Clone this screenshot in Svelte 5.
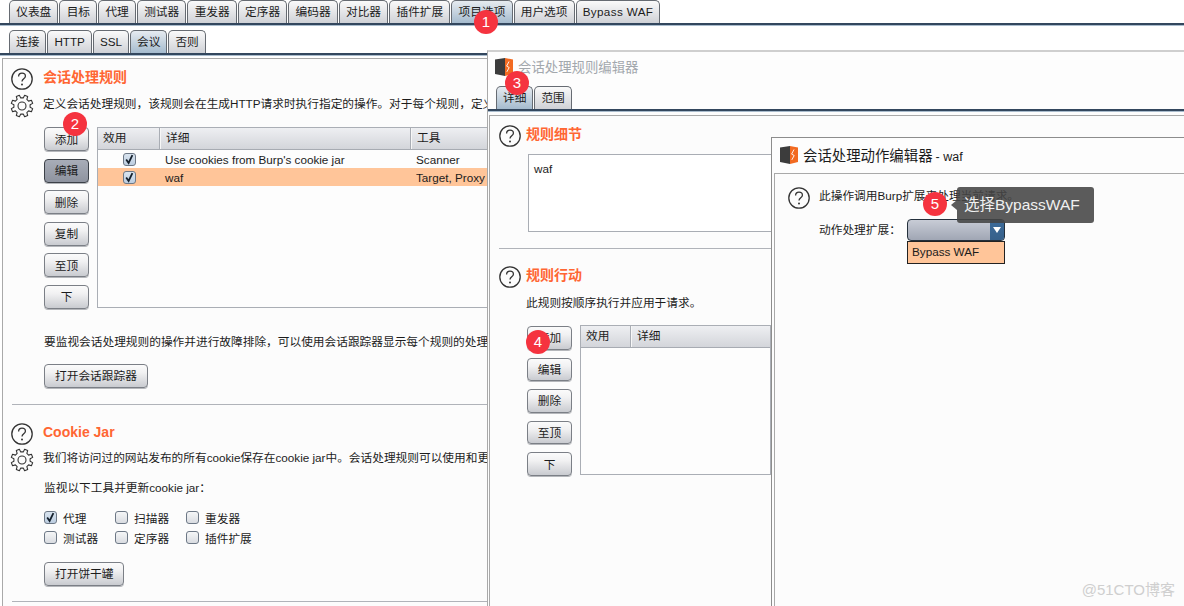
<script>
  let mainTabs = ['仪表盘', '目标', '代理', '测试器', '重发器', '定序器', '编码器', '对比器', '插件扩展', '项目选项', '用户选项', 'Bypass WAF'];
  let subTabs = ['连接', 'HTTP', 'SSL', '会议', '否则'];
  let ruleButtons = ['添加', '编辑', '删除', '复制', '至顶', '下'];
  let actionButtons = ['添加', '编辑', '删除', '至顶', '下'];
  let rules = [
    { detail: "Use cookies from Burp's cookie jar", tools: 'Scanner', selected: false },
    { detail: 'waf', tools: 'Target, Proxy', selected: true },
  ];
  let jarTools = [
    { name: '代理', on: true },
    { name: '扫描器', on: false },
    { name: '重发器', on: false },
    { name: '测试器', on: false },
    { name: '定序器', on: false },
    { name: '插件扩展', on: false },
  ];

  // 8 tooth cog outline, centred on 12,12
  function gearPoints() {
    let pts = [];
    for (let i = 0; i < 8; i++) {
      let a = (i * Math.PI) / 4 + Math.PI / 8;
      for (let [d, r] of [[-0.24, 8.2], [-0.15, 11], [0.15, 11], [0.24, 8.2]]) {
        pts.push((12 + r * Math.cos(a + d)).toFixed(2) + ',' + (12 + r * Math.sin(a + d)).toFixed(2));
      }
    }
    return pts.join(' ');
  }
  const gear = gearPoints();
</script>

{#snippet question()}
  <svg class="icon" width="22" height="22" viewBox="0 0 22 22">
    <circle cx="11" cy="11" r="10.2" fill="none" stroke="#333" stroke-width="1.3" />
    <path d="M7.6 8.4c0-2 1.5-3.2 3.4-3.2s3.4 1.2 3.4 3c0 2.6-3.4 2.6-3.4 5.4" fill="none" stroke="#333" stroke-width="1.3" />
    <circle cx="11" cy="16.4" r="1" fill="#333" />
  </svg>
{/snippet}

{#snippet cog()}
  <svg class="icon" width="24" height="24" viewBox="0 0 24 24">
    <polygon points={gear} fill="none" stroke="#333" stroke-width="1.1" stroke-linejoin="round" />
    <circle cx="12" cy="12" r="4" fill="none" stroke="#333" stroke-width="1.1" />
  </svg>
{/snippet}

{#snippet logo()}
  <svg class="icon" width="18" height="18" viewBox="0 0 18 18">
    <polygon points="0,1.5 10,0 10,18 0,16" fill="#3c3c3c" />
    <polygon points="10,0 18,1.5 18,16 10,18" fill="#f26a21" />
    <path d="M14 3.5l-2.4 4.6 2.6 1.4-2.4 4.4" fill="none" stroke="#fff" stroke-width="0.9" />
  </svg>
{/snippet}

{#snippet check(on)}
  <span class="check" class:on>
    {#if on}
      <svg width="13" height="13" viewBox="0 0 13 13">
        <path d="M3.2 6.6l2.4 3.4 3.8-7.8" fill="none" stroke="#14202c" stroke-width="1.8" />
      </svg>
    {/if}
  </span>
{/snippet}

<div class="page">
  <div class="tabs top">
    {#each mainTabs as t}
      <div class="tab" class:active={t === '项目选项'} class:latin={t === 'Bypass WAF'}>{t}</div>
    {/each}
  </div>
  <div class="rule"></div>
  <div class="tabs sub">
    {#each subTabs as t}
      <div class="tab" class:active={t === '会议'}>{t}</div>
    {/each}
  </div>
  <div class="rule"></div>

  <div class="panel">
    <div class="head">
      {@render question()}
      <h2>会话处理规则</h2>
    </div>
    <div class="desc">
      {@render cog()}
      <p>定义会话处理规则，该规则会在生成HTTP请求时执行指定的操作。对于每个规则，定义其范围和操作。</p>
    </div>

    <div class="editor">
      <div class="buttons">
        {#each ruleButtons as b}
          <button class:pressed={b === '编辑'}>{b}</button>
        {/each}
      </div>
      <div class="table rules">
        <div class="thead">
          <span>效用</span><span>详细</span><span>工具</span>
        </div>
        {#each rules as r}
          <div class="row" class:selected={r.selected}>
            <span class="mid">{@render check(true)}</span>
            <span>{r.detail}</span>
            <span>{r.tools}</span>
          </div>
        {/each}
      </div>
    </div>

    <p class="note">要监视会话处理规则的操作并进行故障排除，可以使用会话跟踪器显示每个规则的处理过程和结果。</p>
    <button class="open tracker">打开会话跟踪器</button>

    <hr class="first" />

    <div class="head">
      {@render question()}
      <h2>Cookie Jar</h2>
    </div>
    <div class="desc jar">
      {@render cog()}
      <p>我们将访问过的网站发布的所有cookie保存在cookie jar中。会话处理规则可以使用和更新这些cookie。</p>
    </div>
    <p class="monitor">监视以下工具并更新cookie jar：</p>
    <div class="tools">
      {#each jarTools as t}
        <label>{@render check(t.on)}{t.name}</label>
      {/each}
    </div>
    <button class="open jarbtn">打开饼干罐</button>
    <hr class="second" />
  </div>

  <section class="dialog rule-dialog">
    <div class="titlebar">
      {@render logo()}
      <span>会话处理规则编辑器</span>
    </div>
    <div class="tabs inner">
      <div class="tab active">详细</div>
      <div class="tab">范围</div>
    </div>
    <div class="rule"></div>
    <div class="panel inner-panel">
      <div class="head">
        {@render question()}
        <h2>规则细节</h2>
      </div>
      <div class="field">waf</div>
      <hr />
      <div class="head">
        {@render question()}
        <h2>规则行动</h2>
      </div>
      <p class="order">此规则按顺序执行并应用于请求。</p>
      <div class="editor actions">
        <div class="buttons">
          {#each actionButtons as b}
            <button>{b}</button>
          {/each}
        </div>
        <div class="table">
          <div class="thead two">
            <span>效用</span><span>详细</span>
          </div>
        </div>
      </div>
    </div>
  </section>

  <section class="dialog action-dialog">
    <div class="titlebar">
      {@render logo()}
      <span>会话处理动作编辑器<small>- waf</small></span>
    </div>
    <div class="panel action-panel">
      <div class="head">
        {@render question()}
        <p>此操作调用Burp扩展来处理当前请求。</p>
      </div>
      <div class="combo-row">
        <span>动作处理扩展：</span>
        <div class="combo-wrap">
          <div class="combo"><i><svg width="8" height="6" viewBox="0 0 8 6"><path d="M0 0h8L4 6z" fill="#fff" /></svg></i></div>
          <div class="option">Bypass WAF</div>
        </div>
      </div>
    </div>
  </section>

  <div class="tooltip">选择BypassWAF</div>

  <span class="badge b1">1</span>
  <span class="badge b2">2</span>
  <span class="badge b3">3</span>
  <span class="badge b4">4</span>
  <span class="badge b5">5</span>

  <div class="watermark">@51CTO博客</div>
</div>

<style>
  :global(body) {
    margin: 0;
    background: #fff;
  }

  .page {
    position: relative;
    width: 1184px;
    height: 606px;
    overflow: hidden;
    background: #fff;
    color: #1c1c1c;
    font: 11.7px "Liberation Sans", "Noto Sans CJK SC", sans-serif;
  }

  p, h2 {
    margin: 0;
    white-space: nowrap;
  }

  h2 {
    font-size: 14px;
    font-weight: bold;
    color: #ff6633;
    line-height: 16px;
    margin-bottom: 4px;
  }

  .head p, .desc p {
    line-height: 14px;
    margin-bottom: 4px;
  }

  .icon {
    flex: none;
    display: block;
  }

  /* tabs */
  .tabs {
    display: flex;
    gap: 1px;
    height: 23px;
    padding-left: 9px;
    align-items: flex-end;
  }

  .tabs.sub {
    margin-top: 4px;
  }

  .tab {
    box-sizing: border-box;
    height: 23px;
    padding: 0 6px;
    line-height: 22px;
    white-space: nowrap;
    text-align: center;
    border: 1px solid #666b72;
    border-bottom: none;
    border-radius: 5px 5px 0 0;
    background: linear-gradient(#fafafa, #cfd1d6);
  }

  .tabs.top .tab {
    padding: 0 6.2px;
  }

  .tabs.top .tab.latin {
    padding: 0 6px;
    letter-spacing: 0.35px;
  }

  .tab.active {
    background: linear-gradient(#e6ebf0, #a5bbce);
  }

  .rule {
    height: 3px;
    background: linear-gradient(#33475e 0 2px, #a9bccd 2px);
  }

  /* main panel */
  .panel {
    box-sizing: border-box;
    margin: 2px 0 0 2px;
    padding: 9px 0 0 8px;
    height: 548px;
    border-left: 1px solid #a9a9a9;
    border-top: 1px solid #a9a9a9;
    background: #fcfcfc;
    overflow: hidden;
  }

  .head {
    display: flex;
    align-items: center;
    gap: 10px;
    height: 22px;
  }

  .desc {
    display: flex;
    align-items: center;
    gap: 9px;
    margin: 4px 0 0 -1px;
    height: 24px;
  }

  .editor {
    display: flex;
    margin: 9px 0 0 33px;
    gap: 8px;
  }

  .buttons {
    display: flex;
    flex-direction: column;
    gap: 7.6px;
    width: 45px;
    flex: none;
  }

  button {
    box-sizing: border-box;
    height: 24px;
    padding: 0 0 2px;
    font: inherit;
    color: inherit;
    border: 1px solid #7b7f86;
    border-radius: 4px;
    background: linear-gradient(#fbfbfb, #f1f1f2 35%, #c9cbd0);
    box-shadow: 0 1px 0 #b5b7bb;
  }

  button.pressed {
    border-color: #3c4148;
    background: linear-gradient(#a8adb8, #8e939f);
  }

  .table {
    box-sizing: border-box;
    border: 1px solid #aaaeb5;
    background: #fdfdfd;
    flex: 1;
    overflow: hidden;
  }

  .rules {
    flex: none;
    width: 400px;
    height: 181px;
  }

  .thead, .row {
    display: grid;
    grid-template-columns: 62px 251px 1fr;
    align-items: center;
  }

  .thead {
    box-sizing: border-box;
    height: 22px;
    background: linear-gradient(#eeeff2, #d3d5da);
    border-bottom: 1px solid #a7abb2;
  }

  .thead.two {
    grid-template-columns: 50px 1fr;
  }

  .thead span {
    height: 100%;
    line-height: 20px;
    padding-left: 5px;
    border-left: 1px solid #f7f7f7;
    box-shadow: -1px 0 0 #a9adb4;
  }

  .thead span:first-child {
    border-left: none;
    box-shadow: none;
  }

  .row {
    height: 18px;
    line-height: 17px;
  }

  .row > span {
    padding-left: 5px;
    white-space: nowrap;
  }

  .row > .mid {
    display: flex;
    justify-content: center;
    padding: 0;
  }

  .row.selected {
    background: #ffc599;
  }

  .check {
    box-sizing: border-box;
    display: inline-block;
    flex: none;
    width: 13px;
    height: 13px;
    border: 1px solid #6d7886;
    border-radius: 3px;
    background: linear-gradient(#f5f6f7, #d9dce1);
  }

  .check.on {
    background: linear-gradient(#d9e4ef, #bccde0);
  }

  .check svg {
    display: block;
    margin: -1px;
  }

  .note {
    margin: 26px 0 0 33px;
    line-height: 14px;
  }

  .open {
    display: block;
    margin-left: 33px;
    padding: 0 10px 2px;
  }

  .tracker {
    margin-top: 15px;
  }

  hr {
    border: none;
    height: 1px;
    background: #b0b3b9;
    margin: 0;
  }

  .first {
    margin: 16px 0 18px 1px;
  }

  .desc.jar {
    margin-top: 3px;
  }

  .monitor {
    margin: 9px 0 0 33px;
    line-height: 14px;
  }

  .tools {
    display: grid;
    grid-template-columns: repeat(3, 71px);
    grid-auto-rows: 20px;
    margin: 13px 0 0 33px;
    align-items: center;
  }

  .tools label {
    display: flex;
    align-items: center;
    gap: 6px;
    white-space: nowrap;
  }

  .jarbtn {
    margin-top: 14px;
  }

  .second {
    margin: 15px 0 0 1px;
  }

  /* dialogs sit over the main window */
  .dialog {
    position: absolute;
    right: 0;
    bottom: 0;
    background: #fdfdfd;
  }

  .rule-dialog {
    left: 487px;
    top: 50px;
    border-left: 1px solid #a9a9a9;
    border-top: 2px solid #cfcfcf;
  }

  .rule-dialog .titlebar {
    display: flex;
    align-items: center;
    gap: 5px;
    height: 32px;
    padding: 0 0 3px 7px;
    box-sizing: border-box;
    font-size: 13.4px;
    color: #a3a8ad;
  }

  .rule-dialog .titlebar span {
    margin-bottom: 2px;
  }

  .tabs.inner {
    padding-left: 8px;
    margin-top: 2px;
  }

  .inner-panel {
    height: 491px;
    margin: 3px 0 0 1px;
    padding: 9px 0 0 9px;
  }

  .inner-panel .head {
    gap: 5px;
  }

  .field {
    box-sizing: border-box;
    width: 400px;
    height: 78px;
    margin: 7px 0 0 29px;
    padding: 7px 5px;
    border: 1px solid #a9adb4;
    background: #fff;
  }

  .inner-panel hr {
    width: 273px;
    margin: 16px 0 17px 0;
  }

  .order {
    margin: 8px 0 0 27px;
    line-height: 14px;
  }

  .editor.actions {
    margin: 16px 0 0 28px;
    width: 244px;
    height: 150px;
  }

  .editor.actions .table {
    height: 150px;
    margin-top: -1px;
  }

  .action-dialog {
    left: 771px;
    top: 137px;
    border-left: 1px solid #8d8d8d;
    border-top: 1px solid #8d8d8d;
  }

  .action-dialog .titlebar {
    display: flex;
    align-items: center;
    gap: 5px;
    height: 35px;
    padding: 0 0 2px 8px;
    box-sizing: border-box;
    font-size: 14.4px;
  }

  .action-dialog small {
    font-size: 12.5px;
    margin-left: 3px;
  }

  .action-panel {
    height: 440px;
    margin: 0 0 0 2px;
    padding: 13px 0 0 13px;
  }

  .action-panel .head {
    gap: 9px;
  }

  .combo-row {
    display: flex;
    gap: 0;
    margin: 10px 0 0 31px;
  }

  .combo-row > span {
    width: 88px;
    line-height: 21px;
    white-space: nowrap;
  }

  .combo-wrap {
    width: 98px;
  }

  .combo {
    box-sizing: border-box;
    height: 22px;
    position: relative;
    border: 1px solid #24303c;
    border-radius: 4px;
    background: linear-gradient(#c8ccd6, #a0a6b4);
    overflow: hidden;
  }

  .combo i {
    position: absolute;
    right: 0;
    top: 0;
    bottom: 0;
    width: 14px;
    display: flex;
    align-items: center;
    justify-content: center;
    background: linear-gradient(#3d6c9b, #36608a);
  }

  .option {
    box-sizing: border-box;
    height: 23px;
    line-height: 20px;
    padding-left: 4px;
    border: 1px solid #222;
    background: #ffc599;
  }

  .tooltip {
    position: absolute;
    left: 957px;
    top: 187px;
    box-sizing: border-box;
    width: 137px;
    height: 36px;
    padding-left: 7px;
    line-height: 36px;
    font-size: 15.5px;
    color: #f0f0f0;
    background: rgba(68, 68, 68, 0.88);
    border-radius: 3px;
  }

  .tooltip::before {
    content: "";
    position: absolute;
    left: -6px;
    top: 13px;
    border: 5px solid transparent;
    border-left: none;
    border-right: 6px solid rgba(68, 68, 68, 0.88);
  }

  .badge {
    position: absolute;
    width: 24px;
    height: 24px;
    border-radius: 50%;
    background: #f5333f;
    color: #fff;
    font-size: 15px;
    line-height: 24px;
    text-align: center;
  }

  .b1 { left: 474px; top: 10px; }
  .b2 { left: 63px; top: 112px; }
  .b3 { left: 505px; top: 71px; }
  .b4 { left: 526px; top: 330px; }
  .b5 { left: 923px; top: 192px; }

  .watermark {
    position: absolute;
    right: 9px;
    bottom: 7px;
    font-size: 15px;
    color: #cfcfcf;
  }
</style>
